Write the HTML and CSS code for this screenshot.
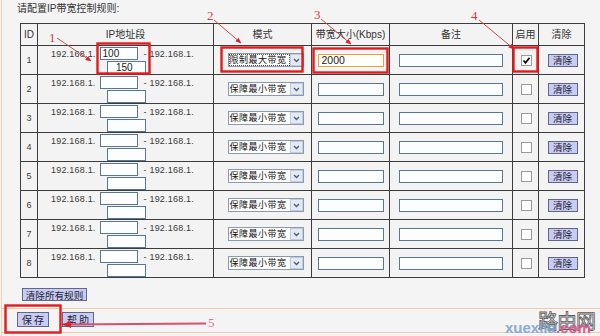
FILE: index.html
```html
<!DOCTYPE html>
<html lang="zh-CN">
<head>
<meta charset="utf-8">
<title>IP带宽控制规则</title>
<link rel="stylesheet" href="styles.css">
</head>
<body>
<div class="page">
  <div class="title">请配置IP带宽控制规则:</div>
  <table class="rules">
    <colgroup>
      <col class="c-id"><col class="c-ip"><col class="c-mode"><col class="c-bw"><col class="c-note"><col class="c-en"><col class="c-clr">
    </colgroup>
    <tr class="head"><th>ID</th><th>IP地址段</th><th>模式</th><th>带宽大小(Kbps)</th><th>备注</th><th>启用</th><th>清除</th></tr>
    <tr>
      <td class="id">1</td>
      <td class="ip"><div class="ipl"><span>192.168.1.</span><input class="ip1" value="100"><span>- 192.168.1.</span></div><div class="ipl2"><input class="ip2" value="150"></div></td>
      <td class="mode"><span class="sel"><span class="selv focus">限制最大带宽</span><span class="arr"><svg width="7" height="5" viewBox="0 0 7 5"><path d="M1 1 L3.5 3.5 L6 1" fill="none" stroke="#4a5a78" stroke-width="1.3"/></svg></span></span></td>
      <td class="bw"><input class="bwi active" value="2000"></td>
      <td class="note"><input class="notei"></td>
      <td class="en"><span class="cb"><svg width="9" height="9" viewBox="0 0 9 9"><path d="M1.5 4.5 L3.5 6.8 L7.5 1.8" fill="none" stroke="#111" stroke-width="1.8"/></svg></span></td>
      <td class="clr"><button class="btn small">清除</button></td>
    </tr>
    <tr>
      <td class="id">2</td>
      <td class="ip"><div class="ipl"><span>192.168.1.</span><input class="ip1"><span>- 192.168.1.</span></div><div class="ipl2"><input class="ip2"></div></td>
      <td class="mode"><span class="sel"><span class="selv">保障最小带宽</span><span class="arr"><svg width="7" height="5" viewBox="0 0 7 5"><path d="M1 1 L3.5 3.5 L6 1" fill="none" stroke="#4a5a78" stroke-width="1.3"/></svg></span></span></td>
      <td class="bw"><input class="bwi"></td>
      <td class="note"><input class="notei"></td>
      <td class="en"><span class="cb"></span></td>
      <td class="clr"><button class="btn small">清除</button></td>
    </tr>
    <tr>
      <td class="id">3</td>
      <td class="ip"><div class="ipl"><span>192.168.1.</span><input class="ip1"><span>- 192.168.1.</span></div><div class="ipl2"><input class="ip2"></div></td>
      <td class="mode"><span class="sel"><span class="selv">保障最小带宽</span><span class="arr"><svg width="7" height="5" viewBox="0 0 7 5"><path d="M1 1 L3.5 3.5 L6 1" fill="none" stroke="#4a5a78" stroke-width="1.3"/></svg></span></span></td>
      <td class="bw"><input class="bwi"></td>
      <td class="note"><input class="notei"></td>
      <td class="en"><span class="cb"></span></td>
      <td class="clr"><button class="btn small">清除</button></td>
    </tr>
    <tr>
      <td class="id">4</td>
      <td class="ip"><div class="ipl"><span>192.168.1.</span><input class="ip1"><span>- 192.168.1.</span></div><div class="ipl2"><input class="ip2"></div></td>
      <td class="mode"><span class="sel"><span class="selv">保障最小带宽</span><span class="arr"><svg width="7" height="5" viewBox="0 0 7 5"><path d="M1 1 L3.5 3.5 L6 1" fill="none" stroke="#4a5a78" stroke-width="1.3"/></svg></span></span></td>
      <td class="bw"><input class="bwi"></td>
      <td class="note"><input class="notei"></td>
      <td class="en"><span class="cb"></span></td>
      <td class="clr"><button class="btn small">清除</button></td>
    </tr>
    <tr>
      <td class="id">5</td>
      <td class="ip"><div class="ipl"><span>192.168.1.</span><input class="ip1"><span>- 192.168.1.</span></div><div class="ipl2"><input class="ip2"></div></td>
      <td class="mode"><span class="sel"><span class="selv">保障最小带宽</span><span class="arr"><svg width="7" height="5" viewBox="0 0 7 5"><path d="M1 1 L3.5 3.5 L6 1" fill="none" stroke="#4a5a78" stroke-width="1.3"/></svg></span></span></td>
      <td class="bw"><input class="bwi"></td>
      <td class="note"><input class="notei"></td>
      <td class="en"><span class="cb"></span></td>
      <td class="clr"><button class="btn small">清除</button></td>
    </tr>
    <tr>
      <td class="id">6</td>
      <td class="ip"><div class="ipl"><span>192.168.1.</span><input class="ip1"><span>- 192.168.1.</span></div><div class="ipl2"><input class="ip2"></div></td>
      <td class="mode"><span class="sel"><span class="selv">保障最小带宽</span><span class="arr"><svg width="7" height="5" viewBox="0 0 7 5"><path d="M1 1 L3.5 3.5 L6 1" fill="none" stroke="#4a5a78" stroke-width="1.3"/></svg></span></span></td>
      <td class="bw"><input class="bwi"></td>
      <td class="note"><input class="notei"></td>
      <td class="en"><span class="cb"></span></td>
      <td class="clr"><button class="btn small">清除</button></td>
    </tr>
    <tr>
      <td class="id">7</td>
      <td class="ip"><div class="ipl"><span>192.168.1.</span><input class="ip1"><span>- 192.168.1.</span></div><div class="ipl2"><input class="ip2"></div></td>
      <td class="mode"><span class="sel"><span class="selv">保障最小带宽</span><span class="arr"><svg width="7" height="5" viewBox="0 0 7 5"><path d="M1 1 L3.5 3.5 L6 1" fill="none" stroke="#4a5a78" stroke-width="1.3"/></svg></span></span></td>
      <td class="bw"><input class="bwi"></td>
      <td class="note"><input class="notei"></td>
      <td class="en"><span class="cb"></span></td>
      <td class="clr"><button class="btn small">清除</button></td>
    </tr>
    <tr>
      <td class="id">8</td>
      <td class="ip"><div class="ipl"><span>192.168.1.</span><input class="ip1"><span>- 192.168.1.</span></div><div class="ipl2"><input class="ip2"></div></td>
      <td class="mode"><span class="sel"><span class="selv">保障最小带宽</span><span class="arr"><svg width="7" height="5" viewBox="0 0 7 5"><path d="M1 1 L3.5 3.5 L6 1" fill="none" stroke="#4a5a78" stroke-width="1.3"/></svg></span></span></td>
      <td class="bw"><input class="bwi"></td>
      <td class="note"><input class="notei"></td>
      <td class="en"><span class="cb"></span></td>
      <td class="clr"><button class="btn small">清除</button></td>
    </tr>
  </table>
  <div class="clear-all"><button class="btn wide">清除所有规则</button></div>
  <div class="footer"><button class="btn act">保 存</button><button class="btn act">帮 助</button></div>

  <svg class="annot" width="600" height="336" viewBox="0 0 600 336">
    <defs>
      <marker id="ah" viewBox="0 0 10 10" refX="9" refY="5" markerWidth="6" markerHeight="6" orient="auto">
        <path d="M0 1 L10 5 L0 9 Z" fill="#d8242a"/>
      </marker>
      <marker id="ah5" viewBox="0 0 10 10" refX="9" refY="5" markerWidth="5" markerHeight="5" orient="auto">
        <path d="M0 1 L10 5 L0 9 Z" fill="#d8242a"/>
      </marker>
    </defs>
    <g fill="none" stroke="#e01c1c" stroke-width="2.4">
      <rect x="97.5" y="43.5" width="52" height="30"/>
      <rect x="221.5" y="47.5" width="81" height="24"/>
      <rect x="313.5" y="48.5" width="74" height="24"/>
      <rect x="513.5" y="47.5" width="24" height="24"/>
      <rect x="5.5" y="305.5" width="55" height="27"/>
    </g>
    <g stroke="#cf4a4a" stroke-width="1" fill="none">
      <line x1="57" y1="38" x2="91" y2="61" marker-end="url(#ah)"/>
      <line x1="214" y1="20" x2="241" y2="43" marker-end="url(#ah)"/>
      <line x1="321" y1="19" x2="351" y2="44" marker-end="url(#ah)"/>
      <line x1="479" y1="20" x2="514" y2="49" marker-end="url(#ah)"/>
      <line x1="206" y1="323.5" x2="63" y2="324.5" stroke="#d85070" stroke-width="1.8" marker-end="url(#ah5)"/>
    </g>
    <g class="nums" fill="#d63a3a">
      <text x="49" y="42">1</text>
      <text x="207" y="20">2</text>
      <text x="314" y="19">3</text>
      <text x="471" y="20">4</text>
      <text x="208" y="327" fill="#e07090">5</text>
    </g>
  </svg>
  <div class="watermark"><span class="wm-cn">路由网</span><span class="wm-en"><span class="wm-b">xuexila</span><span class="wm-p">.com</span></span></div>
</div>
</body>
</html>
```
FILE: styles.css
```css
html, body {
  margin: 0;
  padding: 0;
}
body {
  background: #f4f4f4;
  width: 600px;
  height: 336px;
  overflow: hidden;
  font-family: "Liberation Sans", "Noto Sans CJK SC", sans-serif;
  color: #2a2a2a;
}
.page {
  position: relative;
  height: 336px;
  margin-left: 1px;
  border-left: 1px solid #efd2b6;
}
.title {
  height: 23px;
  box-sizing: border-box;
  padding: 3px 0 0 15px;
  font-size: 10px;
  line-height: 12px;
  color: #333;
}
.rules {
  margin-left: 18px;
  border-collapse: collapse;
  table-layout: fixed;
  width: 564px;
  background: #f3f3f3;
}
.c-id { width: 17px; }
.c-ip { width: 176px; }
.c-mode { width: 98px; }
.c-bw { width: 78px; }
.c-note { width: 123px; }
.c-en { width: 26px; }
.c-clr { width: 46px; }
.rules th, .rules td {
  border: 1px solid #3c3c3c;
  padding: 0;
}
.rules th {
  height: 21px;
  font-weight: normal;
  font-size: 10px;
  line-height: 12px;
  color: #333;
  text-align: center;
  vertical-align: middle;
}
.rules td {
  height: 28px;
  text-align: center;
  vertical-align: middle;
  font-size: 9px;
  line-height: 10px;
  color: #3a3a3a;
}
.rules td.ip {
  vertical-align: top;
  padding-top: 1px;
  height: 27px;
}
.ipl {
  display: flex;
  justify-content: center;
  align-items: flex-start;
  height: 14px;
  line-height: 11px;
  white-space: nowrap;
  letter-spacing: 0.2px;
  padding-right: 6px;
}
.ipl span {
  padding-top: 2px;
}
.ipl2 {
  display: flex;
  justify-content: center;
  height: 13px;
  padding-left: 2px;
}
input {
  font-family: "Liberation Sans", "Noto Sans CJK SC", sans-serif;
  box-sizing: border-box;
  margin: 0;
  border: 1px solid #5b7690;
  background: #fbfdff;
  color: #222;
  outline: none;
}
.ip1 {
  width: 38px;
  height: 13px;
  margin: 0 6px 0 4px;
  padding: 0 2px;
  font-size: 10px;
}
.ip2 {
  width: 39px;
  height: 13px;
  padding: 0 2px 0 8px;
  font-size: 10px;
}
.sel {
  display: inline-flex;
  align-items: stretch;
  box-sizing: border-box;
  width: 76px;
  height: 14px;
  border: 1px solid #8a9ab0;
  background: #fff;
  vertical-align: middle;
  margin-left: 6px;
}
.selv {
  flex: 1;
  min-width: 0;
  font-size: 9px;
  letter-spacing: 0.5px;
  line-height: 12px;
  text-align: left;
  padding-left: 1px;
  color: #111;
  font-family: "Noto Sans CJK SC", sans-serif;
  white-space: nowrap;
}
.selv.focus {
  outline: 1px dotted #555;
  outline-offset: -1px;
}
.arr {
  flex: 0 0 13px;
  box-sizing: border-box;
  border: 1px solid #c4cbd8;
  background: #e4e9f3;
  display: flex;
  align-items: center;
  justify-content: center;
}
.bwi {
  width: 66px;
  height: 13px;
  padding: 0 3px;
  font-size: 10px;
  vertical-align: middle;
}
.bwi.active {
  border-color: #e8a23c;
  background: #fffef8;
  font-size: 10.5px;
}
.notei {
  width: 104px;
  height: 13px;
  vertical-align: middle;
}
.cb {
  display: inline-flex;
  align-items: center;
  justify-content: center;
  box-sizing: border-box;
  width: 11px;
  height: 11px;
  border: 1px solid #9a9a9a;
  background: #fff;
  vertical-align: middle;
  margin-left: 1px;
}
.btn {
  font-family: "Noto Sans CJK SC", sans-serif;
  box-sizing: border-box;
  margin: 0;
  padding: 0;
  background: #c9ccf0;
  border: 1px solid #61668f;
  color: #1d1d3a;
  font-size: 9.6px;
  line-height: 10px;
  cursor: pointer;
}
.btn.small {
  width: 30px;
  height: 13px;
  vertical-align: middle;
  margin-left: 2px;
}
.clear-all {
  padding: 10px 0 0 20px;
  height: 30px;
  box-sizing: border-box;
}
.btn.wide {
  display: block;
  width: 65px;
  height: 13px;
}
.footer {
  display: flex;
  gap: 13px;
  align-items: flex-start;
  box-sizing: border-box;
  height: 25px;
  padding: 3px 0 0 15px;
  border-top: 1px solid #f3c9a6;
  border-bottom: 1px solid #f3c9a6;
}
.btn.act {
  width: 32px;
  height: 15px;
  font-size: 10px;
}
.annot {
  position: absolute;
  left: -2px;
  top: 0;
  pointer-events: none;
}
.nums text {
  font-family: "Liberation Serif", serif;
  font-size: 13px;
}
.watermark {
  position: absolute;
  right: 3px;
  bottom: 0;
  width: 92px;
  height: 26px;
  pointer-events: none;
}
.wm-cn {
  position: absolute;
  right: 2px;
  top: 0;
  font-family: "Noto Sans CJK SC", sans-serif;
  font-size: 20px;
  line-height: 22px;
  color: #f4f4f4;
  -webkit-text-stroke: 0.8px #5a5a5a;
  letter-spacing: -1px;
}
.wm-en {
  position: absolute;
  left: 0;
  bottom: 0;
  font-family: "Liberation Sans", sans-serif;
  font-weight: bold;
  font-size: 15px;
  line-height: 16px;
}
.wm-b { color: #78a6d6; opacity: 0.9; }
.wm-p { color: #e04f8c; opacity: 0.9; }
```
